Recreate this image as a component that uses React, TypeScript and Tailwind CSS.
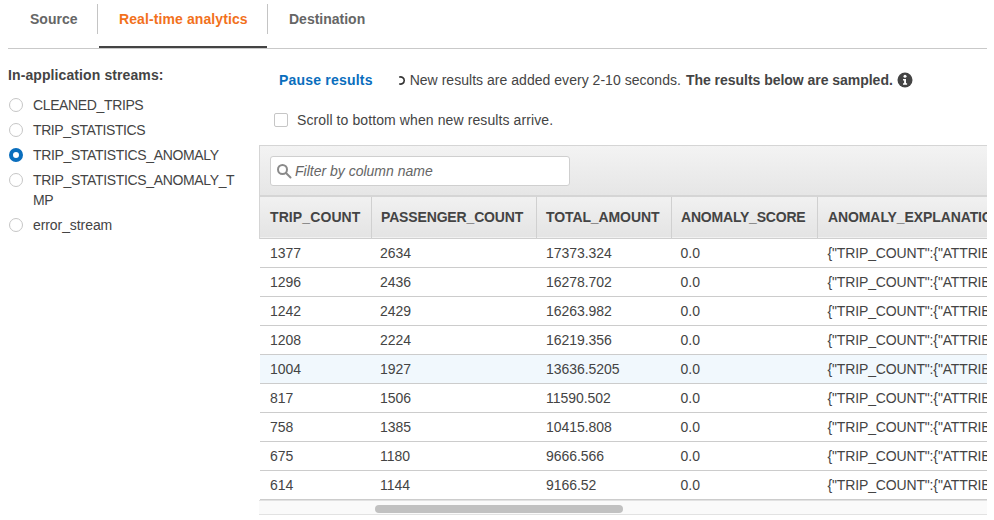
const streams = [
  { name: "CLEANED_TRIPS", track: "tracking-[-0.37px]" },
  { name: "TRIP_STATISTICS", track: "tracking-[-0.42px]" },
  { name: "TRIP_STATISTICS_ANOMALY", track: "tracking-[-0.35px]", selected: true },
  { name: "TRIP_STATISTICS_ANOMALY_TMP", track: "tracking-[-0.35px]" },
  { name: "error_stream", track: "tracking-[-0.08px]" },
];

const columns = [
  { name: "TRIP_COUNT", width: "w-[112px]", track: "tracking-[0.1px]" },
  { name: "PASSENGER_COUNT", width: "w-[165px]", track: "tracking-[-0.15px]" },
  { name: "TOTAL_AMOUNT", width: "w-[135px]", track: "tracking-[-0.1px]" },
  { name: "ANOMALY_SCORE", width: "w-[146px]", track: "tracking-[-0.2px]" },
  { name: "ANOMALY_EXPLANATION", width: "w-[170px]", track: "tracking-[-0.1px]" },
];

const rows = [
  ["1377", "2634", "17373.324"],
  ["1296", "2436", "16278.702"],
  ["1242", "2429", "16263.982"],
  ["1208", "2224", "16219.356"],
  ["1004", "1927", "13636.5205"],
  ["817", "1506", "11590.502"],
  ["758", "1385", "10415.808"],
  ["675", "1180", "9666.566"],
  ["614", "1144", "9166.52"],
];

const Tabs = () => (
  <div className="flex h-[49px] ml-2 mr-[7px] border-b border-[#c9c9c9] text-sm font-bold text-[#666666]">
    <div className="w-[90px] h-[30px] mt-1 pl-[22px] leading-[30px] border-r border-[#c4c4c4]">Source</div>
    <div className="w-[168px] h-[48px] ml-px pl-[20px] pt-1 leading-[30px] tracking-[0.1px] text-[#f2711c] border-b-2 border-[#444444] -mb-px">
      Real-time analytics
    </div>
    <div className="h-[30px] mt-1 pl-[21px] leading-[30px] border-l border-[#c4c4c4]">Destination</div>
  </div>
);

const Sidebar = () => (
  <div className="w-[251px] ml-2 shrink-0">
    <div className="h-5 mt-4 text-sm font-bold leading-5 tracking-[0.1px] text-[#444444]">In-application streams:</div>
    <div className="flex flex-col gap-[5px] mt-[10px]">
      {streams.map((s) => (
        <div key={s.name} className="flex items-start text-sm leading-5 text-[#444444]">
          {s.selected ? (
            <span className="w-[14px] h-[14px] ml-px mt-[3px] shrink-0 rounded-full border-[4px] border-[#0a6ebd] bg-white" />
          ) : (
            <span className="w-[14px] h-[14px] ml-px mt-[3px] shrink-0 rounded-full border border-[#c6c6c6] bg-white" />
          )}
          <span className={`w-[205px] ml-[10px] break-all ${s.track}`}>{s.name}</span>
        </div>
      ))}
    </div>
  </div>
);

const ResultsTable = () => (
  <div className="mt-[15px] mr-[7px] overflow-hidden">
    <div className="h-[52px] pt-[10px] pl-[10px] border-t border-l border-[#d5d5d5] border-b-2 border-b-[#d5d5d5] bg-gradient-to-b from-[#f3f3f3] to-[#e6e6e6]">
      <div className="flex items-center w-[300px] h-[30px] rounded-[3px] border border-[#cfcfcf] bg-white pl-[5px] text-sm italic text-[#666666]">
        <svg width="16" height="16" viewBox="0 0 16 16" fill="none" stroke="#8a8a8a" strokeWidth="2" className="mr-[3px] shrink-0">
          <circle cx="6.5" cy="6.5" r="4.5" />
          <path d="M10 10l4.5 4.5" strokeLinecap="round" />
        </svg>
        Filter by column name
      </div>
    </div>
    <table className="table-fixed w-[728px] border-collapse text-sm text-[#444444]">
      <thead>
        <tr className="h-[41px] bg-gradient-to-b from-[#f1f1f1] to-[#e4e4e4] border-b border-[#cfcfcf]">
          {columns.map((c, i) => (
            <th
              key={c.name}
              className={`${c.width} ${c.track} ${i === 0 || i === 4 ? "pl-[10px]" : "pl-[9px]"} pr-0 text-left font-bold whitespace-nowrap overflow-hidden ${i < 4 ? "border-r border-[#d0d0d0]" : ""} ${i === 0 ? "border-l border-l-[#d5d5d5]" : ""}`}
            >
              {c.name}
            </th>
          ))}
        </tr>
      </thead>
      <tbody>
        {rows.map((r, i) => (
          <tr key={r[0]} className={`h-[29px] border-b border-[#cccccc] ${i === 4 ? "bg-[#f1f8fd]" : "bg-white"}`}>
            <td className="pl-[10.5px]">{r[0]}</td>
            <td className="pl-[8.5px]">{r[1]}</td>
            <td className="pl-[9.5px] tracking-[-0.05px]">{r[2]}</td>
            <td className="pl-[9px]">0.0</td>
            <td className="pl-[10px] whitespace-nowrap overflow-hidden tracking-[-0.15px]">{'{"TRIP_COUNT":{"ATTRIBUTION_SCORE"'}</td>
          </tr>
        ))}
      </tbody>
    </table>
    <div className="h-[15px] pt-[4px] pl-[116px] bg-[#fafafa] border-t border-[#e2e2e2] border-b">
      <div className="w-[248px] h-2 rounded-full bg-[#c1c1c1]" />
    </div>
  </div>
);

const Results = () => (
  <div className="flex-1 min-w-0">
    <div className="flex items-center h-5 mt-[21px] text-sm text-[#444444]">
      <span className="ml-5 font-bold tracking-[0.2px] text-[#0a6ebd]">Pause results</span>
      <svg width="9" height="9" viewBox="0 0 9 9" fill="none" stroke="#333333" strokeWidth="1.6" className="ml-[25px] mr-[3px]">
        <path d="M1.2 1.2A3.6 3.6 0 1 1 1.2 7.8" />
      </svg>
      <span className="tracking-[0.03px]">New results are added every 2-10 seconds.</span>
      <span className="ml-[5px] font-bold tracking-[-0.03px]">The results below are sampled.</span>
      <svg width="16" height="16" viewBox="0 0 16 16" className="ml-[4px]">
        <circle cx="8" cy="8" r="7.5" fill="#444444" />
        <circle cx="8" cy="4.2" r="1.5" fill="#ffffff" />
        <path d="M6 7h3v4.2h1.1v1.5H6v-1.5h1.1V8.4H6z" fill="#ffffff" />
      </svg>
    </div>
    <div className="flex items-center h-5 mt-5 text-sm text-[#444444]">
      <span className="w-[14px] h-[14px] ml-[15px] rounded-[2px] border border-[#c6c6c6] bg-white" />
      <span className="ml-[9px] tracking-[0.1px]">Scroll to bottom when new results arrive.</span>
    </div>
    <ResultsTable />
  </div>
);

const App = () => {
  return (
    <div className="w-[994px] h-[520px] overflow-hidden bg-white font-['Liberation_Sans',Arial,sans-serif]">
      <Tabs />
      <div className="flex">
        <Sidebar />
        <Results />
      </div>
    </div>
  );
};

export default App;
